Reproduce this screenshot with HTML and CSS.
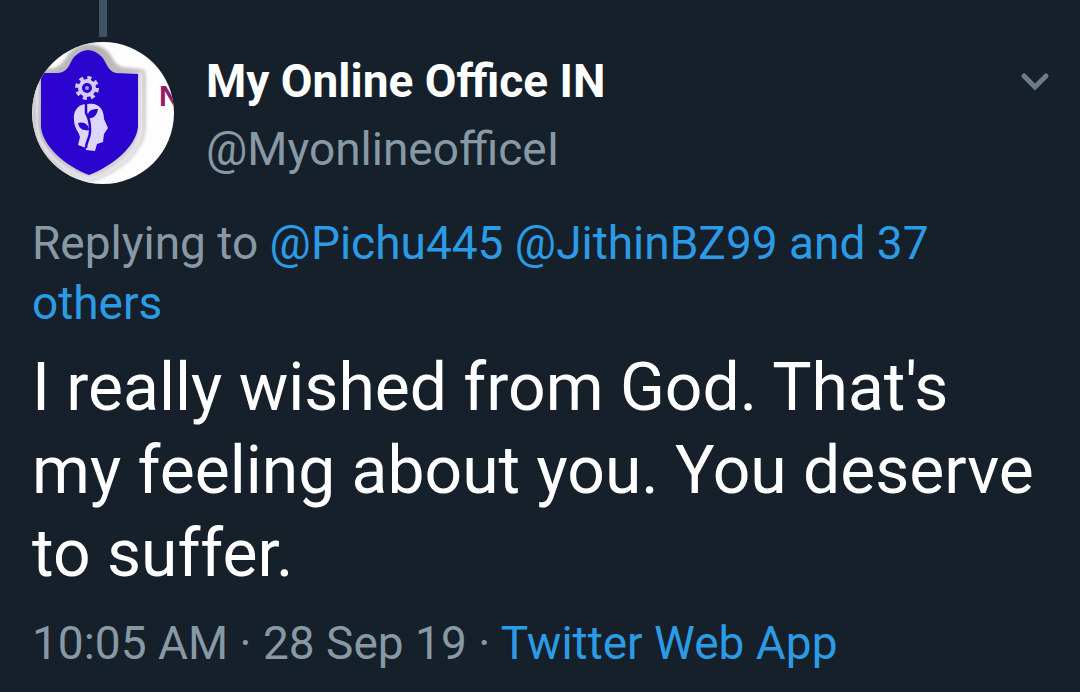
FILE: index.html
```html
<!DOCTYPE html>
<html lang="en">
<head>
<meta charset="utf-8">
<meta name="viewport" content="width=device-width, initial-scale=1">
<title>Tweet</title>
<link rel="stylesheet" href="styles.css">
</head>
<body>
<article class="tweet">
  <div class="thread-line"></div>
  <header class="author">
    <svg class="avatar" viewBox="0 0 142 142" role="img" aria-label="My Online Office IN">
      <defs>
        <clipPath id="circle"><circle cx="71" cy="71" r="71"/></clipPath>
        <filter id="soft"><feGaussianBlur stdDeviation="1.5"/></filter>
        <linearGradient id="rim" x1="0" y1="0" x2="1" y2="1">
          <stop offset="0" stop-color="#cfcdcd"/>
          <stop offset=".3" stop-color="#b3b0b0"/>
          <stop offset=".6" stop-color="#c9c7cb"/>
          <stop offset="1" stop-color="#dcdade"/>
        </linearGradient>
      </defs>
      <g clip-path="url(#circle)">
        <rect width="142" height="142" fill="#fefdfe"/>
        <path filter="url(#soft)" fill="url(#rim)" d="M0 28L22 26C32 23 34 13 41 7Q56 -3 73 7C80 12 81 22 90 25L110 27Q114 28 114 34V86C113 110 86 133 58 140C28 133 1 112 1 86Z"/>
        <path filter="url(#soft)" fill="none" stroke="#f0eef3" stroke-width="3" d="M5 31V86C7 109 32 130 57 137C82 131 108 110 109 86V30"/>
        <path fill="#2b04cf" d="M9 31L27 31C38 29 37 20 43 14Q56 2 69 14C75 20 75 29 84 31L106 32V85C104 105 80 124 57 133C34 124 11 105 9 85Z"/>
        <g fill="none" stroke="#d3ccf7">
          <circle cx="55" cy="46" r="7" stroke-width="4"/>
          <circle cx="55" cy="46" r="10" stroke-width="4" stroke-dasharray="4 3.854"/>
        </g>
        <circle cx="55" cy="46" r="2" fill="#a99cf0"/>
        <path fill="#dcd7fa" d="M53 62C45 63 41 70 42 78C42 86 47 90 48 95L46 103L54 106V108L63 109L65 102L71 100L72 92L76 86L72 77C72 67 66 60 56 62Z"/>
        <path fill="none" stroke="#2b04cf" stroke-width="2.500" d="M54 59V71C57 76 58 80 58 87C59 95 54 99 54 106"/>
        <path fill="#2b04cf" d="M56 76C55 69 59 67 66 67C65 73 62 77 56 76ZM57 88C50 89 47 86 46 81C52 79 57 83 57 88Z"/>
        <text class="avatar-text" x="127" y="64">N</text>
      </g>
    </svg>
    <div class="names">
      <div class="name">My Online Office IN</div>
      <div class="handle">@MyonlineofficeI</div>
    </div>
    <button class="more" type="button" aria-label="More options">
      <svg class="chevron" viewBox="0 0 28 18" aria-hidden="true"><path d="M4 3L15 14L26 3"/></svg>
    </button>
  </header>
  <p class="reply">Replying to <a href="#">@Pichu445</a> <a href="#">@JithinBZ99</a> <a href="#">and 37 others</a></p>
  <p class="message">I really wished from God. That's my feeling about you. You deserve to suffer.</p>
  <footer class="meta"><time datetime="2019-09-28T10:05">10:05 AM · 28 Sep 19</time> · <a href="#">Twitter Web App</a></footer>
</article>
</body>
</html>
```
FILE: styles.css
```css
* {
  box-sizing: border-box;
}

body {
  margin: 0;
  background: #16202a;
  color: #8899a6;
  font: 46px/60px Roboto, "Noto Sans", sans-serif;
}

a {
  color: #2c9be6;
  text-decoration: none;
}

.tweet {
  padding: 0 32px 16px;
}

.thread-line {
  width: 8px;
  height: 37px;
  margin: 0 0 5px 67px;
  background: #3d5466;
}

.author {
  display: flex;
  align-items: flex-start;
}

.avatar {
  flex: none;
  width: 142px;
  height: 142px;
}

.avatar-text {
  font: bold 30px "Liberation Sans", sans-serif;
  fill: #96186a;
}

.names {
  flex: 1;
  min-width: 0;
  padding: 5px 0 0 32px;
  line-height: 68px;
}

.name {
  color: #fff;
  font-weight: 700;
}

.more {
  display: flex;
  margin: 31px 0 0;
  padding: 0;
  border: 0;
  background: none;
  cursor: pointer;
}

.chevron {
  width: 28px;
  height: 18px;
  overflow: visible;
  fill: none;
  stroke: #6c7b88;
  stroke-width: 5;
  stroke-linecap: round;
}

.reply {
  margin: 29px 0 13px;
}

.message {
  margin: 0 0 18px;
  color: #fff;
  font-size: 66px;
  line-height: 83px;
}
```
